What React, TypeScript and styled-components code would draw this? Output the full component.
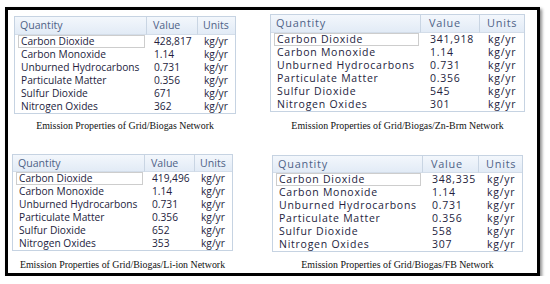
import { Fragment } from "react";
import styled, { createGlobalStyle } from "styled-components";

const GlobalStyle = createGlobalStyle`
  body {
    margin: 0;
    background: #ffffff;
  }
`;

const StyledFrame = styled.div`
  margin: 7px 0 0 5px;
  width: 535px;
  height: 269px;
  box-sizing: border-box;
  border: 3px solid #000000;
  box-shadow: 2px 2px 3px rgba(0, 0, 0, 0.45);
  display: grid;
  grid-template-columns: 262px 1fr;
  grid-template-rows: 140px 1fr;
`;

const StyledPanel = styled.div<{ $dx: number; $dy: number }>`
  padding: ${(p) => p.$dy}px 0 0 ${(p) => p.$dx}px;
  display: flex;
  flex-direction: column;
  align-items: flex-start;
`;

const StyledTable = styled.div<{ $cols: string; $size: number; $spacing: number }>`
  display: grid;
  grid-template-columns: ${(p) => p.$cols};
  grid-auto-rows: min-content;
  border: 1px solid #c6d3e2;
  background: #ffffff;
  font-family: "Open Sans", "Noto Sans", sans-serif;
  font-size: ${(p) => p.$size}px;
  letter-spacing: ${(p) => p.$spacing}px;
`;

const StyledHead = styled.div<{ $height: number; $pad: number; $last?: boolean }>`
  height: ${(p) => p.$height}px;
  display: flex;
  align-items: center;
  padding-left: ${(p) => p.$pad}px;
  background: linear-gradient(#f3f7fc, #e2ebf6);
  border-bottom: 1px solid #d3dde9;
  border-right: ${(p) => (p.$last ? "none" : "1px solid #c9d5e3")};
  color: #4f6387;
  font-size: 1.04em;
  white-space: nowrap;
  line-height: 1;
`;

const StyledCell = styled.div<{ $pad: number; $focused?: boolean }>`
  height: 13px;
  line-height: 13px;
  display: flex;
  align-items: center;
  color: #241d3d;
  white-space: nowrap;
  outline: ${(p) => (p.$focused ? "1px solid #cdcdcd" : "none")};
  outline-offset: -1px;
  margin: ${(p) => (p.$focused ? "0 2px 0 3px" : "0")};
  padding-left: ${(p) => (p.$focused ? p.$pad - 3 : p.$pad)}px;
`;

const StyledCaption = styled.div<{ $width: number; $gap: number }>`
  width: ${(p) => p.$width}px;
  margin-top: ${(p) => p.$gap}px;
  text-align: center;
  font-family: "Liberation Serif", "DejaVu Serif", serif;
  font-size: 9.9px;
  line-height: 11px;
  color: #111111;
  white-space: nowrap;
`;

const names = [
  "Carbon Dioxide",
  "Carbon Monoxide",
  "Unburned Hydrocarbons",
  "Particulate Matter",
  "Sulfur Dioxide",
  "Nitrogen Oxides",
];

type PanelProps = {
  values: string[];
  caption: string;
  dx: number;
  dy: number;
  cols: [number, number, number];
  headHeight: number;
  size: number;
  spacing: number;
  pads: [number, number, number];
  gap: number;
};

const EmissionPanel = ({ values, caption, dx, dy, cols, headHeight, size, spacing, pads, gap }: PanelProps) => {
  const width = cols[0] + cols[1] + cols[2] + 2;

  return (
    <StyledPanel $dx={dx} $dy={dy}>
      <StyledTable $cols={cols.map((c) => `${c}px`).join(" ")} $size={size} $spacing={spacing}>
        <StyledHead $height={headHeight} $pad={5}>Quantity</StyledHead>
        <StyledHead $height={headHeight} $pad={pads[1] - 1}>Value</StyledHead>
        <StyledHead $height={headHeight} $pad={pads[2] - 1} $last>Units</StyledHead>
        {names.map((name, i) => (
          <Fragment key={name}>
            <StyledCell $pad={pads[0]} $focused={i === 0}>{name}</StyledCell>
            <StyledCell $pad={pads[1]}>{values[i]}</StyledCell>
            <StyledCell $pad={pads[2]}>kg/yr</StyledCell>
          </Fragment>
        ))}
      </StyledTable>
      <StyledCaption $width={width} $gap={gap}>{caption}</StyledCaption>
    </StyledPanel>
  );
};

const App = () => {
  return (
    <>
      <GlobalStyle />
      <StyledFrame>
        <EmissionPanel
          values={["428,817", "1.14", "0.731", "0.356", "671", "362"]}
          caption="Emission Properties of Grid/Biogas Network"
          dx={6}
          dy={6}
          cols={[132, 51, 37]}
          headHeight={17}
          size={10.2}
          spacing={0}
          pads={[6, 7, 6]}
          gap={6}
        />
        <EmissionPanel
          values={["341,918", "1.14", "0.731", "0.356", "545", "301"]}
          caption="Emission Properties of Grid/Biogas/Zn-Brm Network"
          dx={0}
          dy={4}
          cols={[150, 59, 44]}
          headHeight={17}
          size={10.5}
          spacing={0.75}
          pads={[6, 9, 8]}
          gap={8}
        />
        <EmissionPanel
          values={["419,496", "1.14", "0.731", "0.356", "652", "353"]}
          caption="Emission Properties of Grid/Biogas/Li-ion Network"
          dx={4}
          dy={4}
          cols={[132, 50, 37]}
          headHeight={16}
          size={10.2}
          spacing={0}
          pads={[6, 7, 6]}
          gap={8}
        />
        <EmissionPanel
          values={["348,335", "1.14", "0.731", "0.356", "558", "307"]}
          caption="Emission Properties of Grid/Biogas/FB Network"
          dx={2}
          dy={5}
          cols={[150, 56, 43]}
          headHeight={16}
          size={10.5}
          spacing={0.75}
          pads={[6, 9, 8]}
          gap={7}
        />
      </StyledFrame>
    </>
  );
};

export default App;
